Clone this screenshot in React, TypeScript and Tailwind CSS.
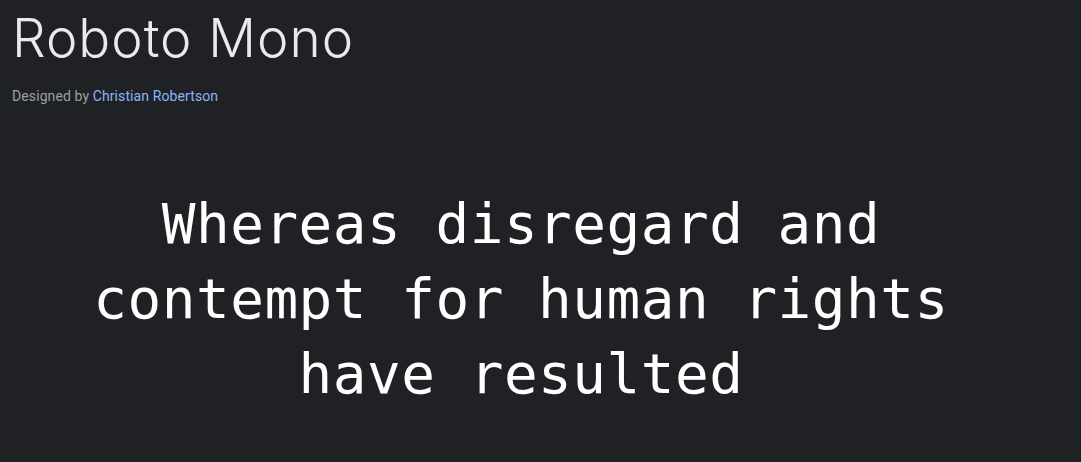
export default function App() {
  return (
    <div className="min-h-[462px] w-full bg-[#202124] text-[#e8eaed]">
      <header className="pl-3 pt-[8px]">
        <h1 className="text-[53px] leading-[60px] font-light tracking-[1px] font-['Inter',sans-serif]">
          Roboto Mono
        </h1>
        <p className="mt-[19px] text-[14px] leading-[18px] tracking-[0.1px] text-[#9aa0a6] font-['Roboto',sans-serif]">
          Designed by{" "}
          <a href="#" className="text-[#8ab4f8]">
            Christian Robertson
          </a>
        </p>
      </header>

      <main className="pl-3 pr-[51px] pt-[81px]">
        <p className="text-center text-[56px] leading-[75px] tracking-[0.5px] text-white font-['DejaVu_Sans_Mono',monospace]">
          Whereas disregard and contempt for human rights have resulted
        </p>
      </main>
    </div>
  )
}
